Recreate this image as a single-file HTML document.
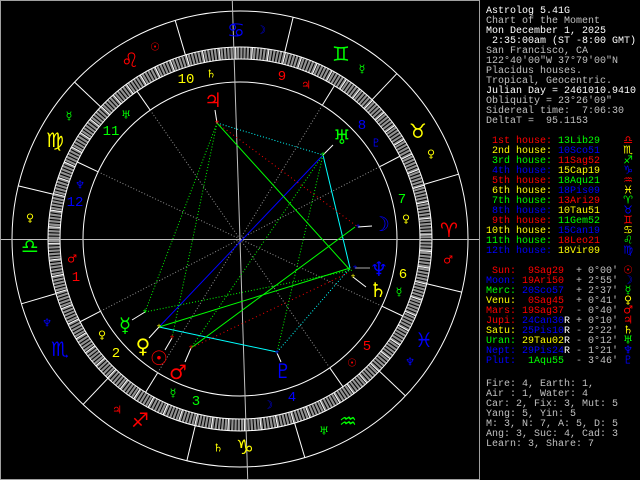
<!DOCTYPE html>
<html><head><meta charset="utf-8"><style>
html,body{margin:0;padding:0;background:#000;width:640px;height:480px;overflow:hidden}
svg{display:block}
.t{font-family:"Liberation Mono",monospace;font-size:10px}
.t text,.t tspan{white-space:pre}
.g{font-family:"DejaVu Sans",sans-serif;text-anchor:middle;dominant-baseline:central}
.n{font-family:"Liberation Mono",monospace;font-size:14px;text-anchor:middle;dominant-baseline:central}
</style></head><body>
<svg width="640" height="480" viewBox="0 0 640 480" xmlns="http://www.w3.org/2000/svg">
<rect x="0" y="0" width="640" height="480" fill="#000"/>
<rect x="0.5" y="0.5" width="479" height="479" fill="none" stroke="#a0a0a0" stroke-width="1"/>
<g transform="translate(240,239)">
 <circle r="186" fill="none" stroke="#909090" stroke-width="12" stroke-dasharray="2.2 1.046"/>
 <circle r="186" fill="none" stroke="#fff" stroke-width="12" stroke-dasharray="1 15.23" transform="rotate(13.48)"/>
 <circle r="228" fill="none" stroke="#fff"/>
 <circle r="192" fill="none" stroke="#fff"/>
 <circle r="180" fill="none" stroke="#fff"/>
 <circle r="157" fill="none" stroke="#fff"/>
 <g stroke="#fff" stroke-width="1">
  <line x1="192" y1="0" x2="228" y2="0" transform="rotate(-346.52)"/>
  <line x1="192" y1="0" x2="228" y2="0" transform="rotate(-16.52)"/>
  <line x1="192" y1="0" x2="228" y2="0" transform="rotate(-46.52)"/>
  <line x1="192" y1="0" x2="228" y2="0" transform="rotate(-76.52)"/>
  <line x1="192" y1="0" x2="228" y2="0" transform="rotate(-106.52)"/>
  <line x1="192" y1="0" x2="228" y2="0" transform="rotate(-136.52)"/>
  <line x1="192" y1="0" x2="228" y2="0" transform="rotate(-166.52)"/>
  <line x1="192" y1="0" x2="228" y2="0" transform="rotate(-196.52)"/>
  <line x1="192" y1="0" x2="228" y2="0" transform="rotate(-226.52)"/>
  <line x1="192" y1="0" x2="228" y2="0" transform="rotate(-256.52)"/>
  <line x1="192" y1="0" x2="228" y2="0" transform="rotate(-286.52)"/>
  <line x1="192" y1="0" x2="228" y2="0" transform="rotate(-316.52)"/>
 </g>
 <g stroke="#fff">
  <line x1="157" y1="0" x2="180" y2="0" transform="rotate(-207.37)"/>
  <line x1="157" y1="0" x2="180" y2="0" transform="rotate(-238.39)"/>
  <line x1="157" y1="0" x2="180" y2="0" transform="rotate(-304.87)"/>
  <line x1="157" y1="0" x2="180" y2="0" transform="rotate(-334.67)"/>
  <line x1="157" y1="0" x2="180" y2="0" transform="rotate(-27.37)"/>
  <line x1="157" y1="0" x2="180" y2="0" transform="rotate(-58.39)"/>
  <line x1="157" y1="0" x2="180" y2="0" transform="rotate(-124.87)"/>
  <line x1="157" y1="0" x2="180" y2="0" transform="rotate(-154.67)"/>
 </g>
 <g stroke="#909090" stroke-dasharray="1 2">
  <line x1="0" y1="0" x2="157" y2="0" transform="rotate(-207.37)"/>
  <line x1="0" y1="0" x2="157" y2="0" transform="rotate(-238.39)"/>
  <line x1="0" y1="0" x2="157" y2="0" transform="rotate(-304.87)"/>
  <line x1="0" y1="0" x2="157" y2="0" transform="rotate(-334.67)"/>
  <line x1="0" y1="0" x2="157" y2="0" transform="rotate(-27.37)"/>
  <line x1="0" y1="0" x2="157" y2="0" transform="rotate(-58.39)"/>
  <line x1="0" y1="0" x2="157" y2="0" transform="rotate(-124.87)"/>
  <line x1="0" y1="0" x2="157" y2="0" transform="rotate(-154.67)"/>
 </g>
</g>
<line x1="1" y1="239.5" x2="479" y2="239.5" stroke="#c0c0c0"/>
<line x1="232.3" y1="1" x2="247.7" y2="479" stroke="#c0c0c0"/>
<g stroke-width="1" fill="none">
 <line x1="323" y1="155" x2="350" y2="268" stroke="#0ff"/>
 <line x1="159" y1="327" x2="277" y2="352" stroke="#0ff"/>
 <line x1="277" y1="352" x2="350" y2="268" stroke="#0ff" stroke-dasharray="1 2"/>
 <line x1="217" y1="123" x2="323" y2="155" stroke="#0ff" stroke-dasharray="1 2"/>
 <line x1="159" y1="327" x2="323" y2="155" stroke="#00f"/>
 <line x1="217" y1="123" x2="358" y2="227" stroke="#f00" stroke-dasharray="1 3"/>
 <line x1="191" y1="348" x2="350" y2="272" stroke="#f00" stroke-dasharray="1 3"/>
 <line x1="217" y1="123" x2="350" y2="270" stroke="#0f0"/>
 <line x1="159" y1="327" x2="350" y2="268" stroke="#0f0"/>
 <line x1="191" y1="348" x2="355" y2="227" stroke="#0f0"/>
 <line x1="217" y1="123" x2="145" y2="312" stroke="#0f0" stroke-dasharray="1 2"/>
 <line x1="217" y1="123" x2="172" y2="338" stroke="#0f0" stroke-dasharray="1 2"/>
 <line x1="323" y1="155" x2="277" y2="352" stroke="#0f0" stroke-dasharray="1 2"/>
 <line x1="145" y1="312" x2="353" y2="270" stroke="#0f0" stroke-dasharray="1 2"/>
 <line x1="323" y1="155" x2="191" y2="348" stroke="#0f0" stroke-dasharray="1 2"/>
</g>
<g stroke="#fff">
 <line x1="145" y1="312" x2="132" y2="320"/>
 <line x1="159" y1="327" x2="149" y2="338"/>
 <line x1="172" y1="338" x2="165" y2="350"/>
 <line x1="191" y1="348" x2="185" y2="362"/>
 <line x1="217" y1="123" x2="215" y2="110"/>
 <line x1="323" y1="155" x2="333" y2="145"/>
 <line x1="358" y1="227" x2="372" y2="226"/>
 <line x1="355" y1="268" x2="370" y2="268" stroke="#aaa"/>
 <line x1="353" y1="277" x2="366" y2="287"/>
 <line x1="277" y1="353" x2="281" y2="362"/>
</g>
<g font-family="Liberation Mono" font-size="8" text-anchor="middle" dominant-baseline="central">
 <text x="145" y="312" fill="#0f0">+</text><text x="159" y="327" fill="#ff0">+</text>
 <text x="172" y="338" fill="#f00">+</text><text x="191" y="348" fill="#f00">+</text>
 <text x="217" y="123" fill="#f00">+</text><text x="323" y="155" fill="#0f0">+</text>
 <text x="358" y="227" fill="#00f">+</text><text x="355" y="268" fill="#00f">+</text>
 <text x="353" y="277" fill="#ff0">+</text><text x="277" y="353" fill="#00f">+</text>
</g>
<g class="g" font-size="20">
 <text x="449" y="230" fill="#f00">♈</text>
 <text x="418" y="131" fill="#ff0">♉</text>
 <text x="341" y="54" fill="#0f0">♊</text>
 <text x="236" y="30" fill="#00f">♋</text>
 <text x="130" y="60" fill="#f00">♌</text>
 <text x="55" y="140" fill="#ff0">♍</text>
 <text x="30" y="246" fill="#0f0">♎</text>
 <text x="60" y="349" fill="#00f">♏</text>
 <text x="140" y="420" fill="#f00">♐</text>
 <text x="245" y="447" fill="#ff0">♑</text>
 <text x="348" y="421" fill="#0f0">♒</text>
 <text x="424" y="340" fill="#00f">♓</text>
</g>
<g class="g" font-size="20">
 <text x="125" y="325" fill="#0f0">☿</text>
 <text x="143" y="346" fill="#ff0">♀</text>
 <text x="159" y="358" fill="#f00">☉</text>
 <text x="178" y="372" fill="#f00">♂</text>
 <text x="213" y="100" fill="#f00">♃</text>
 <text x="342" y="137" fill="#0f0">♅</text>
 <text x="381" y="224" fill="#00f">☽</text>
 <text x="379" y="269" fill="#00f">♆</text>
 <text x="378" y="290" fill="#ff0">♄</text>
 <text x="283" y="371" fill="#00f">♇</text>
</g>
<g class="g" font-size="11">
 <text x="155" y="47" fill="#f00">☉</text>
 <text x="211" y="74" fill="#ff0">♄</text>
 <text x="126" y="115" fill="#0f0">♅</text>
 <text x="69" y="116" fill="#0f0">☿</text>
 <text x="80" y="185" fill="#00f">♆</text>
 <text x="30" y="218" fill="#ff0">♀</text>
 <text x="261" y="30" fill="#00f">☽</text>
 <text x="362" y="69" fill="#0f0">☿</text>
 <text x="306" y="85" fill="#f00">♃</text>
 <text x="376" y="143" fill="#00f">♇</text>
 <text x="431" y="154" fill="#ff0">♀</text>
 <text x="406" y="219" fill="#ff0">♀</text>
 <text x="72" y="259" fill="#f00">♂</text>
 <text x="448" y="260" fill="#f00">♂</text>
 <text x="47" y="323" fill="#00f">♆</text>
 <text x="102" y="335" fill="#ff0">♀</text>
 <text x="173" y="393" fill="#0f0">☿</text>
 <text x="117" y="410" fill="#f00">♃</text>
 <text x="218" y="448" fill="#ff0">♄</text>
 <text x="399" y="292" fill="#0f0">☿</text>
 <text x="410" y="362" fill="#00f">♆</text>
 <text x="352" y="363" fill="#f00">☉</text>
 <text x="268" y="405" fill="#00f">☽</text>
 <text x="324" y="431" fill="#0f0">♅</text>
</g>
<g class="n">
 <text x="76" y="278" fill="#f00">1</text>
 <text x="116" y="354" fill="#ff0">2</text>
 <text x="196" y="402" fill="#0f0">3</text>
 <text x="292" y="398" fill="#00f">4</text>
 <text x="367" y="347" fill="#f00">5</text>
 <text x="403" y="275" fill="#ff0">6</text>
 <text x="402" y="200" fill="#0f0">7</text>
 <text x="362" y="126" fill="#00f">8</text>
 <text x="282" y="77" fill="#f00">9</text>
 <text x="186" y="80" fill="#ff0">10</text>
 <text x="111" y="132" fill="#0f0">11</text>
 <text x="75" y="203" fill="#00f">12</text>
</g>
<g class="t" xml:space="preserve">
 <text x="486" y="13" fill="#fff">Astrolog 5.41G</text>
 <text x="486" y="23" fill="#c0c0c0">Chart of the Moment</text>
 <text x="486" y="33" fill="#fff">Mon December 1, 2025</text>
 <text x="486" y="43" fill="#fff"> 2:35:00am (ST -8:00 GMT)</text>
 <text x="486" y="53" fill="#c0c0c0">San Francisco, CA</text>
 <text x="486" y="63" fill="#c0c0c0">122°40'00"W 37°79'00"N</text>
 <text x="486" y="73" fill="#c0c0c0">Placidus houses.</text>
 <text x="486" y="83" fill="#c0c0c0">Tropical, Geocentric.</text>
 <text x="486" y="93" fill="#fff">Julian Day = 2461010.9410</text>
 <text x="486" y="103" fill="#c0c0c0">Obliquity = 23°26'09"</text>
 <text x="486" y="113" fill="#c0c0c0">Sidereal time:  7:06:30</text>
 <text x="486" y="123" fill="#c0c0c0">DeltaT =  95.1153</text>
 <text x="486" y="143"><tspan fill="#f00"> 1st house: </tspan><tspan fill="#0f0">13Lib29</tspan></text>
 <text x="486" y="153"><tspan fill="#ff0"> 2nd house: </tspan><tspan fill="#00f">10Sco51</tspan></text>
 <text x="486" y="163"><tspan fill="#0f0"> 3rd house: </tspan><tspan fill="#f00">11Sag52</tspan></text>
 <text x="486" y="173"><tspan fill="#00f"> 4th house: </tspan><tspan fill="#ff0">15Cap19</tspan></text>
 <text x="486" y="183"><tspan fill="#f00"> 5th house: </tspan><tspan fill="#0f0">18Aqu21</tspan></text>
 <text x="486" y="193"><tspan fill="#ff0"> 6th house: </tspan><tspan fill="#00f">18Pis09</tspan></text>
 <text x="486" y="203"><tspan fill="#0f0"> 7th house: </tspan><tspan fill="#f00">13Ari29</tspan></text>
 <text x="486" y="213"><tspan fill="#00f"> 8th house: </tspan><tspan fill="#ff0">10Tau51</tspan></text>
 <text x="486" y="223"><tspan fill="#f00"> 9th house: </tspan><tspan fill="#0f0">11Gem52</tspan></text>
 <text x="486" y="233"><tspan fill="#ff0">10th house: </tspan><tspan fill="#00f">15Can19</tspan></text>
 <text x="486" y="243"><tspan fill="#0f0">11th house: </tspan><tspan fill="#f00">18Leo21</tspan></text>
 <text x="486" y="253"><tspan fill="#00f">12th house: </tspan><tspan fill="#ff0">18Vir09</tspan></text>
 <text x="486" y="273"><tspan fill="#f00"> Sun:  9Sag29</tspan><tspan fill="#c0c0c0">  + 0°00'</tspan></text>
 <text x="486" y="283"><tspan fill="#00f">Moon: </tspan><tspan fill="#f00">19Ari50</tspan><tspan fill="#c0c0c0">  + 2°55'</tspan></text>
 <text x="486" y="293"><tspan fill="#0f0">Merc: </tspan><tspan fill="#00f">20Sco57</tspan><tspan fill="#c0c0c0">  + 2°37'</tspan></text>
 <text x="486" y="303"><tspan fill="#ff0">Venu: </tspan><tspan fill="#f00"> 0Sag45</tspan><tspan fill="#c0c0c0">  + 0°41'</tspan></text>
 <text x="486" y="313"><tspan fill="#f00">Mars: 19Sag37</tspan><tspan fill="#c0c0c0">  - 0°40'</tspan></text>
 <text x="486" y="323"><tspan fill="#f00">Jupi: </tspan><tspan fill="#00f">24Can30</tspan><tspan fill="#fff">R</tspan><tspan fill="#c0c0c0"> + 0°10'</tspan></text>
 <text x="486" y="333"><tspan fill="#ff0">Satu: </tspan><tspan fill="#00f">25Pis10</tspan><tspan fill="#fff">R</tspan><tspan fill="#c0c0c0"> - 2°22'</tspan></text>
 <text x="486" y="343"><tspan fill="#0f0">Uran: </tspan><tspan fill="#ff0">29Tau02</tspan><tspan fill="#fff">R</tspan><tspan fill="#c0c0c0"> - 0°12'</tspan></text>
 <text x="486" y="353"><tspan fill="#00f">Nept: 29Pis24</tspan><tspan fill="#fff">R</tspan><tspan fill="#c0c0c0"> - 1°21'</tspan></text>
 <text x="486" y="363"><tspan fill="#00f">Plut: </tspan><tspan fill="#0f0"> 1Aqu55</tspan><tspan fill="#c0c0c0">  - 3°46'</tspan></text>
 <text x="486" y="386" fill="#c0c0c0">Fire: 4, Earth: 1,</text>
 <text x="486" y="396" fill="#c0c0c0">Air : 1, Water: 4</text>
 <text x="486" y="406" fill="#c0c0c0">Car: 2, Fix: 3, Mut: 5</text>
 <text x="486" y="416" fill="#c0c0c0">Yang: 5, Yin: 5</text>
 <text x="486" y="426" fill="#c0c0c0">M: 3, N: 7, A: 5, D: 5</text>
 <text x="486" y="436" fill="#c0c0c0">Ang: 3, Suc: 4, Cad: 3</text>
 <text x="486" y="446" fill="#c0c0c0">Learn: 3, Share: 7</text>
</g>
<g class="g" font-size="11">
 <text x="628" y="140" fill="#f00">♎</text>
 <text x="628" y="150" fill="#ff0">♏</text>
 <text x="628" y="160" fill="#0f0">♐</text>
 <text x="628" y="170" fill="#00f">♑</text>
 <text x="628" y="180" fill="#f00">♒</text>
 <text x="628" y="190" fill="#ff0">♓</text>
 <text x="628" y="200" fill="#0f0">♈</text>
 <text x="628" y="210" fill="#00f">♉</text>
 <text x="628" y="220" fill="#f00">♊</text>
 <text x="628" y="230" fill="#ff0">♋</text>
 <text x="628" y="240" fill="#0f0">♌</text>
 <text x="628" y="250" fill="#00f">♍</text>
 <text x="628" y="270" fill="#f00">☉</text>
 <text x="628" y="280" fill="#00f">☽</text>
 <text x="628" y="290" fill="#0f0">☿</text>
 <text x="628" y="300" fill="#ff0">♀</text>
 <text x="628" y="310" fill="#f00">♂</text>
 <text x="628" y="320" fill="#f00">♃</text>
 <text x="628" y="330" fill="#ff0">♄</text>
 <text x="628" y="340" fill="#0f0">♅</text>
 <text x="628" y="350" fill="#00f">♆</text>
 <text x="628" y="360" fill="#00f">♇</text>
</g>
</svg>
</body></html>
